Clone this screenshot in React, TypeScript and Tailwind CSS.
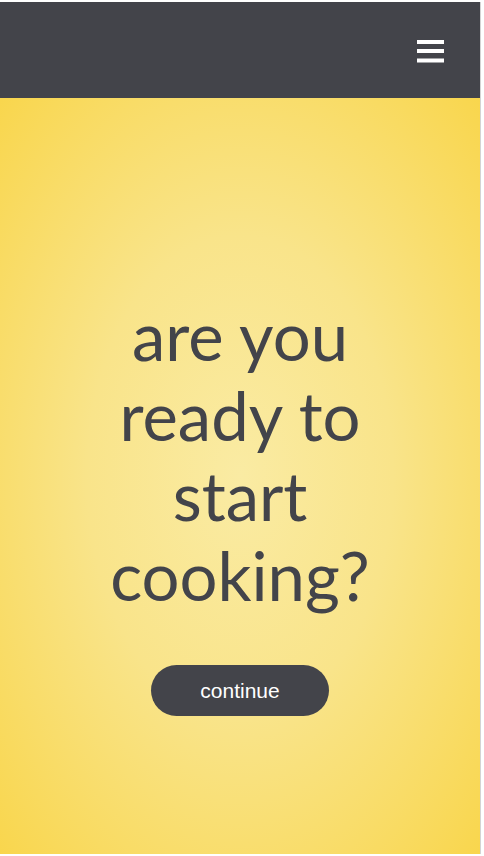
export default function App() {
  return (
    <div className="w-[484px] h-[856px] bg-white pt-[2px] pb-[2px]">
      <div className="w-[481px] h-[852px] border-r border-[#d4d4d4] flex flex-col">
        <header className="h-[96px] bg-[#43444a] flex items-center justify-end pr-[36px] shrink-0">
          <svg width="27" height="24" viewBox="0 0 27 24" className="mt-[2px]">
            <rect x="0" y="1" width="27" height="4" fill="#ffffff" />
            <rect x="0" y="10" width="27" height="4" fill="#ffffff" />
            <rect x="0" y="19.5" width="27" height="4" fill="#ffffff" />
          </svg>
        </header>
        <main
          className="flex-1 flex flex-col items-center pt-[197px] bg-[radial-gradient(ellipse_at_center,_#faeba3_0%,_#f9e48a_45%,_#f9d64d_100%)]"
        >
          <h1
            className="text-center text-[67px] leading-[80px] text-[#43444a] w-[300px]"
            style={{ fontFamily: "Lato, 'Open Sans', sans-serif" }}
          >
            are you ready to start cooking?
          </h1>
          <button
            className="mt-[50px] w-[178px] h-[51px] rounded-full bg-[#43444a] text-white text-[21px]"
            style={{ fontFamily: "'Liberation Sans', Arial, sans-serif" }}
          >
            continue
          </button>
        </main>
      </div>
    </div>
  );
}
